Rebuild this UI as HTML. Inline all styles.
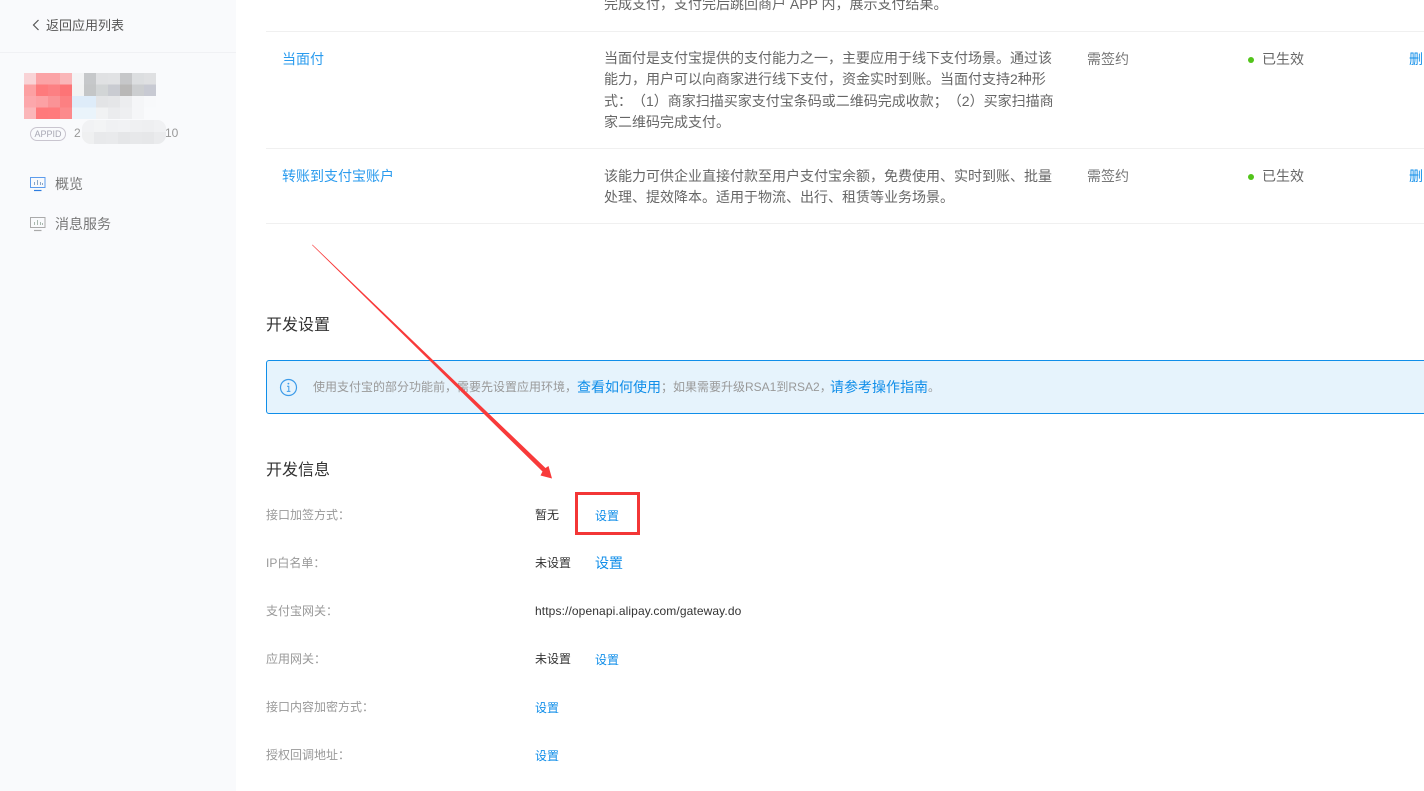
<!DOCTYPE html>
<html lang="zh-CN"><head><meta charset="utf-8"><title>开发设置</title>
<style>
html,body{margin:0;padding:0;background:#fff}
#p{position:relative;width:1424px;height:791px;overflow:hidden;background:#fff;font-family:"Liberation Sans","Noto Sans CJK SC",sans-serif;font-size:12px;color:#666;text-spacing-trim:space-all;font-feature-settings:"palt" 0}
#p div{position:absolute;white-space:nowrap}
.t{height:20px;line-height:20px}
.d{font-size:14px;color:#666;left:604px}
.l{color:#999;left:266px;font-size:12px}
.v{color:#333;left:535px;font-size:12px}
.b{color:#108ee9}
.h{font-size:16px;color:#333;left:266px}
.r{height:1px;left:266px;width:1158px;background:#f0f0f0}
</style></head><body><div id="p">
<div style="left:0;top:0;width:236px;height:791px;background:#f9fafc"></div>
<div style="left:0;top:52px;width:236px;height:1px;background:#f0f1f4"></div>
<svg style="position:absolute;left:31px;top:19px" width="10" height="12" viewBox="0 0 10 12"><path d="M7.5 1L2.5 6l5 5" fill="none" stroke="#555" stroke-width="1.2"/></svg>
<div class="t" style="left:46px;top:16px;font-size:13px;color:#555">返回应用列表</div>

<svg style="position:absolute;left:24px;top:73px" width="132" height="46" viewBox="0 0 132 48" preserveAspectRatio="none" shape-rendering="crispEdges">
<g>
<rect x="0" y="0" width="12" height="12" fill="#f9d3d6"/><rect x="12" y="0" width="12" height="12" fill="#fba3a6"/><rect x="24" y="0" width="12" height="12" fill="#fba3a6"/><rect x="36" y="0" width="12" height="12" fill="#fab6b8"/><rect x="48" y="0" width="12" height="12" fill="#f3f4f5"/><rect x="60" y="0" width="12" height="12" fill="#c6c8ca"/><rect x="72" y="0" width="12" height="12" fill="#e0e1e3"/><rect x="84" y="0" width="12" height="12" fill="#e1e2e4"/><rect x="96" y="0" width="12" height="12" fill="#c6c7c9"/><rect x="108" y="0" width="12" height="12" fill="#dcdee0"/><rect x="120" y="0" width="12" height="12" fill="#dfe0e2"/>
<rect x="0" y="12" width="12" height="12" fill="#fca0a2"/><rect x="12" y="12" width="12" height="12" fill="#fe7a7c"/><rect x="24" y="12" width="12" height="12" fill="#fc8083"/><rect x="36" y="12" width="12" height="12" fill="#fd7476"/><rect x="48" y="12" width="12" height="12" fill="#f2f3f3"/><rect x="60" y="12" width="12" height="12" fill="#c4c6c7"/><rect x="72" y="12" width="12" height="12" fill="#d2d5d6"/><rect x="84" y="12" width="12" height="12" fill="#c9cbd1"/><rect x="96" y="12" width="12" height="12" fill="#b9b8b7"/><rect x="108" y="12" width="12" height="12" fill="#ccced0"/><rect x="120" y="12" width="12" height="12" fill="#c8cad3"/>
<rect x="0" y="24" width="12" height="12" fill="#fca7ab"/><rect x="12" y="24" width="12" height="12" fill="#fca1a4"/><rect x="24" y="24" width="12" height="12" fill="#fa9396"/><rect x="36" y="24" width="12" height="12" fill="#fc8082"/><rect x="48" y="24" width="12" height="12" fill="#deecf9"/><rect x="60" y="24" width="12" height="12" fill="#deecf9"/><rect x="72" y="24" width="12" height="12" fill="#e3e4e6"/><rect x="84" y="24" width="12" height="12" fill="#e5e6e8"/><rect x="96" y="24" width="12" height="12" fill="#ecedef"/><rect x="108" y="24" width="12" height="12" fill="#f5f6f8"/><rect x="120" y="24" width="12" height="12" fill="#f8f9fb"/>
<rect x="0" y="36" width="12" height="12" fill="#fbb6b9"/><rect x="12" y="36" width="12" height="12" fill="#ff797b"/><rect x="24" y="36" width="12" height="12" fill="#ff7a7c"/><rect x="36" y="36" width="12" height="12" fill="#fc8a8c"/><rect x="48" y="36" width="12" height="12" fill="#eaf4fb"/><rect x="60" y="36" width="12" height="12" fill="#eaf4fb"/><rect x="72" y="36" width="12" height="12" fill="#f1f2f3"/><rect x="84" y="36" width="12" height="12" fill="#ebecee"/><rect x="96" y="36" width="12" height="12" fill="#eeeff1"/><rect x="108" y="36" width="12" height="12" fill="#f5f6f8"/><rect x="120" y="36" width="12" height="12" fill="#f9fafc"/>
</g></svg>

<div style="left:30px;top:127px;width:34px;height:12px;line-height:12px;border:1px solid #c9c5cf;border-radius:7px;font-size:9px;color:#a8a8b4;text-align:center">APPID</div>
<div class="t" style="left:74px;top:123px;color:#999;font-size:12px">2</div>
<div class="t" style="left:165px;top:123px;color:#999;font-size:12px">10</div>
<div style="left:82px;top:120px;width:84px;height:24px;border-radius:9px;overflow:hidden;background:#eeeff1">
<svg style="display:block" width="84" height="24" shape-rendering="crispEdges"><rect x="0" y="0" width="12" height="12" fill="#f1f2f4"/><rect x="12" y="0" width="12" height="12" fill="#f3f4f5"/><rect x="24" y="0" width="12" height="12" fill="#f0f1f3"/><rect x="36" y="0" width="12" height="12" fill="#f1f2f4"/><rect x="48" y="0" width="12" height="12" fill="#eff0f2"/><rect x="60" y="0" width="12" height="12" fill="#eeeff1"/><rect x="72" y="0" width="12" height="12" fill="#f0f1f3"/><rect x="0" y="12" width="12" height="12" fill="#eff0f1"/><rect x="12" y="12" width="12" height="12" fill="#e8e9eb"/><rect x="24" y="12" width="12" height="12" fill="#e9eaec"/><rect x="36" y="12" width="12" height="12" fill="#e5e6e8"/><rect x="48" y="12" width="12" height="12" fill="#e7e8ea"/><rect x="60" y="12" width="12" height="12" fill="#e6e7e9"/><rect x="72" y="12" width="12" height="12" fill="#eaebed"/></svg></div>

<svg style="position:absolute;left:30px;top:176px" width="16" height="16" viewBox="0 0 16 16" fill="none"><rect x=".5" y="1.5" width="14.5" height="10" stroke="#5d9cec"/><path d="M4.5 9V6M7.5 9V4M10.5 9V6M12.5 9V7" stroke="#8aa6c8"/><path d="M4 14.5h7.5" stroke="#2e7de0" stroke-width="1.2"/></svg>
<div class="t" style="left:55px;top:174px;font-size:14px;color:#777">概览</div>
<svg style="position:absolute;left:30px;top:216px" width="16" height="16" viewBox="0 0 16 16" fill="none"><rect x=".5" y="1.5" width="14.5" height="10" stroke="#aaa"/><path d="M4.5 9V6M7.5 9V4M10.5 9V6M12.5 9V7" stroke="#a8b8ae"/><path d="M4 14.5h7.5" stroke="#aaa" stroke-width="1.2"/></svg>
<div class="t" style="left:55px;top:214px;font-size:14px;color:#777">消息服务</div>

<div class="t d" style="top:-6px">完成支付，支付完后跳回商户 APP 内，展示支付结果。</div>
<div class="r" style="top:31px"></div>
<div class="t b" style="left:282px;top:49px;font-size:14px;color:#2a9bee">当面付</div>
<div class="t d" style="top:48px">当面付是支付宝提供的支付能力之一，主要应用于线下支付场景。通过该</div>
<div class="t d" style="top:69px">能力，用户可以向商家进行线下支付，资金实时到账。当面付支持2种形</div>
<div class="t d" style="top:91px">式：（1）商家扫描买家支付宝条码或二维码完成收款；（2）买家扫描商</div>
<div class="t d" style="top:112px">家二维码完成支付。</div>
<div class="t" style="left:1087px;top:49px;font-size:14px;color:#777">需签约</div>
<div style="left:1248px;top:57px;width:6px;height:6px;border-radius:50%;background:#52c41a"></div>
<div class="t" style="left:1262px;top:49px;font-size:14px;color:#666">已生效</div>
<div class="t b" style="left:1409px;top:49px;font-size:14px">删除</div>
<div class="r" style="top:148px"></div>
<div class="t b" style="left:282px;top:166px;font-size:14px;color:#2a9bee">转账到支付宝账户</div>
<div class="t d" style="top:166px">该能力可供企业直接付款至用户支付宝余额，免费使用、实时到账、批量</div>
<div class="t d" style="top:187px">处理、提效降本。适用于物流、出行、租赁等业务场景。</div>
<div class="t" style="left:1087px;top:166px;font-size:14px;color:#777">需签约</div>
<div style="left:1248px;top:174px;width:6px;height:6px;border-radius:50%;background:#52c41a"></div>
<div class="t" style="left:1262px;top:166px;font-size:14px;color:#666">已生效</div>
<div class="t b" style="left:1409px;top:166px;font-size:14px">删除</div>
<div class="r" style="top:223px"></div>

<div class="t h" style="top:316px">开发设置</div>
<div style="left:266px;top:360px;width:1170px;height:52px;border:1px solid #108ee9;border-radius:3px;background:#e6f3fc"></div>
<svg style="position:absolute;left:279px;top:378px" width="19" height="19" viewBox="0 0 19 19" fill="none"><circle cx="9.5" cy="9.5" r="8" stroke="#3d9be9" stroke-width="1.2"/><path d="M8 8.2h1.8v5M7.8 13.4h3.6" stroke="#3d9be9"/><circle cx="9.4" cy="5.6" r=".9" fill="#3d9be9"/></svg>
<div class="t" style="left:313px;top:377px;color:#999;font-size:12px">使用支付宝的部分功能前，需要先设置应用环境，</div>
<div class="t b" style="left:577px;top:377px;font-size:14px">查看如何使用</div>
<div class="t" style="left:661px;top:377px;color:#999;font-size:12px">；如果需要升级RSA1到RSA2，</div>
<div class="t b" style="left:830px;top:377px;font-size:14px">请参考操作指南</div>
<div class="t" style="left:928px;top:377px;color:#999;font-size:12px">。</div>

<div class="t h" style="top:461px">开发信息</div>
<div class="t l" style="top:505px">接口加签方式：</div>
<div class="t v" style="top:505px">暂无</div>
<div class="t b" style="left:595px;top:506px;font-size:12px">设置</div>
<div class="t l" style="top:553px">IP白名单：</div>
<div class="t v" style="top:553px">未设置</div>
<div class="t b" style="left:595px;top:553px;font-size:14px">设置</div>
<div class="t l" style="top:601px">支付宝网关：</div>
<div class="t v" style="top:601px;letter-spacing:.11px">https://openapi.alipay.com/gateway.do</div>
<div class="t l" style="top:649px">应用网关：</div>
<div class="t v" style="top:649px">未设置</div>
<div class="t b" style="left:595px;top:650px;font-size:12px">设置</div>
<div class="t l" style="top:697px">接口内容加密方式：</div>
<div class="t b" style="left:535px;top:698px;font-size:12px">设置</div>
<div class="t l" style="top:745px">授权回调地址：</div>
<div class="t b" style="left:535px;top:746px;font-size:12px">设置</div>

<div style="left:575px;top:492px;width:59px;height:37px;border:3px solid #f33636"></div>
<svg style="position:absolute;left:0;top:0" width="1424" height="791"><path d="M312 245L312.5 244.6L545.5 468L548.5 466L552 478.5L540.5 475.5L542.5 471.5Z" fill="#f83a3a"/></svg>
</div></body></html>
